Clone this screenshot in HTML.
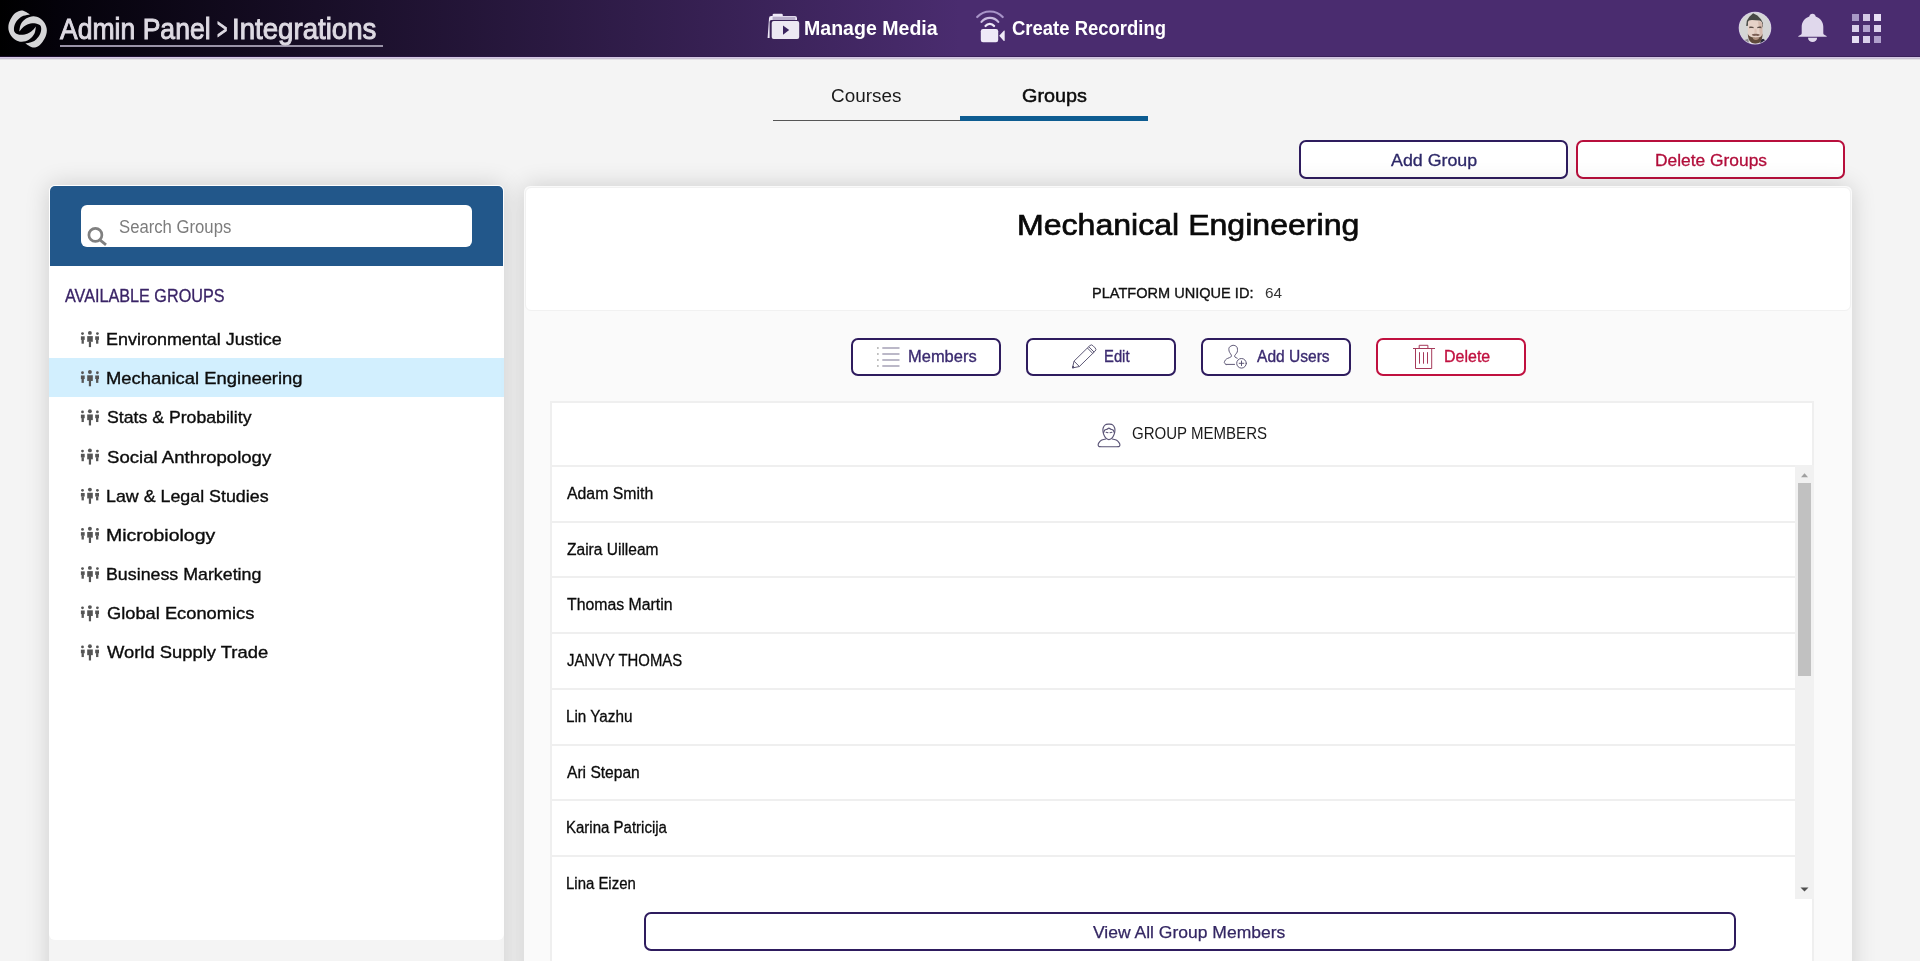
<!DOCTYPE html>
<html lang="en">
<head>
<meta charset="utf-8">
<title>Admin Panel - Integrations</title>
<style>
*{box-sizing:border-box;margin:0;padding:0}
html,body{width:1920px;height:961px;overflow:hidden}
body{background:#f4f4f4;font-family:"Liberation Sans",sans-serif;color:#0c0c0c;position:relative}
.a{position:absolute}
.t{position:absolute;white-space:nowrap;display:block;transform-origin:0 50%}
svg{position:absolute;overflow:visible}
#hdr{position:absolute;left:0;top:0;width:1920px;height:57px;border-bottom:1px solid rgba(45,26,72,.55);background:linear-gradient(to right,#000 0%,#04020a 3%,#4a2c6f 50%,#4a2c6f 100%)}
#hdrline{position:absolute;left:0;top:57px;width:1920px;height:1px;background:#d5c7e5;box-shadow:0 1px 0 #c9c1d3,0 2px 0 #e4e2e7}
.btn{position:absolute;border:2px solid #2e1c5e;border-radius:7px;background:#fff}
.btn.red{border-color:#b80f3c}
#leftsh{position:absolute;left:49px;top:185px;width:455px;height:900px;border-radius:6px;box-shadow:0 0 24px rgba(0,0,0,.16)}
#left{position:absolute;left:49px;top:185px;width:455px;height:755px;background:#fff;border-radius:6px;overflow:hidden}
#lefthead{position:absolute;left:1px;top:1px;width:453px;height:80px;background:#22578a;border-radius:5px 5px 0 0}
#search{position:absolute;left:31px;top:19px;width:391px;height:42px;background:#fff;border-radius:6px}
#sel{position:absolute;left:0;top:173px;width:455px;height:39px;background:#d2effe}
#right{position:absolute;left:524px;top:186px;width:1328px;height:800px;background:#fafafa;border-radius:6px;box-shadow:0 0 24px rgba(0,0,0,.16)}
#card{position:absolute;left:1px;top:1px;width:1326px;height:124px;background:#fff;border-radius:6px;border:1px solid #f1f1f1}
#tbl{position:absolute;left:26px;top:215px;width:1264px;height:600px;background:#fff;border:2px solid #efefef}
.rl{position:absolute;left:0;width:1243px;height:2px;background:#efefef}
#sbar{position:absolute;left:1243px;top:62px;width:19px;height:434px;background:#f1f1f1}
#thumb{position:absolute;left:3px;top:18px;width:13px;height:193px;background:#c1c1c1}
</style>
</head>
<body>
<div id="hdr"></div>
<div id="hdrline"></div>

<div class="a" style="left:60px;top:45px;width:323px;height:1.500px;background:#9a93a8"></div>
<!-- tabs -->
<div class="a" style="left:773px;top:120px;width:187px;height:1px;background:#555"></div>
<div class="a" style="left:960px;top:116px;width:188px;height:5px;background:#0d5c91"></div>

<!-- top buttons -->
<div class="btn" style="left:1299px;top:140px;width:269px;height:39px"></div>
<div class="btn red" style="left:1576px;top:140px;width:269px;height:39px"></div>

<!-- left panel -->
<div id="leftsh"></div>
<div id="left">
  <div id="lefthead"><div id="search"></div></div>
  <div id="sel"></div>
</div>

<!-- right panel -->
<div id="right">
  <div id="card"></div>
  <div class="btn" style="left:327px;top:152px;width:150px;height:38px"></div>
  <div class="btn" style="left:502px;top:152px;width:150px;height:38px"></div>
  <div class="btn" style="left:677px;top:152px;width:150px;height:38px"></div>
  <div class="btn red" style="left:852px;top:152px;width:150px;height:38px;border-color:#c0103f"></div>
  <div id="tbl">
    <div class="rl" style="top:62px;width:1260px"></div>
    <div class="rl" style="top:118px"></div>
    <div class="rl" style="top:173px"></div>
    <div class="rl" style="top:229px"></div>
    <div class="rl" style="top:285px"></div>
    <div class="rl" style="top:341px"></div>
    <div class="rl" style="top:396px"></div>
    <div class="rl" style="top:452px"></div>
    <div id="sbar"><div id="thumb"></div></div>
    <div class="btn" style="left:92px;top:509px;width:1092px;height:39px"></div>
  </div>
</div>

<svg width="1920" height="961" viewBox="0 0 1920 961" style="left:0;top:0;pointer-events:none">
<g fill="#d6d6d8"><path d="M29.93 14.41C28.67 13.76 24.77 10.77 22.38 10.51C20.00 10.25 17.61 11.33 15.62 12.85C13.62 14.37 11.63 17.19 10.41 19.62C9.20 22.05 8.33 24.91 8.33 27.43C8.33 29.94 9.20 32.63 10.41 34.71C11.63 36.80 13.71 38.75 15.62 39.92C17.53 41.09 19.61 41.83 21.86 41.74C24.12 41.65 27.07 40.74 29.15 39.40C31.23 38.05 33.23 35.84 34.36 33.67C35.48 31.50 35.66 27.60 35.92 26.38C35.35 27.03 33.88 29.09 32.54 30.29C31.19 31.49 29.80 32.81 27.85 33.57C25.90 34.32 22.90 34.93 20.82 34.82C18.74 34.70 16.50 33.86 15.36 32.89C14.21 31.92 13.95 30.57 13.95 28.99C13.95 27.40 14.54 25.06 15.36 23.36C16.17 21.67 17.50 20.09 18.84 18.84C20.19 17.59 21.58 16.61 23.43 15.87C25.27 15.13 28.85 14.65 29.93 14.41Z"/><path d="M29.93 14.41C28.67 13.76 24.77 10.77 22.38 10.51C20.00 10.25 17.61 11.33 15.62 12.85C13.62 14.37 11.63 17.19 10.41 19.62C9.20 22.05 8.33 24.91 8.33 27.43C8.33 29.94 9.20 32.63 10.41 34.71C11.63 36.80 13.71 38.75 15.62 39.92C17.53 41.09 19.61 41.83 21.86 41.74C24.12 41.65 27.07 40.74 29.15 39.40C31.23 38.05 33.23 35.84 34.36 33.67C35.48 31.50 35.66 27.60 35.92 26.38C35.35 27.03 33.88 29.09 32.54 30.29C31.19 31.49 29.80 32.81 27.85 33.57C25.90 34.32 22.90 34.93 20.82 34.82C18.74 34.70 16.50 33.86 15.36 32.89C14.21 31.92 13.95 30.57 13.95 28.99C13.95 27.40 14.54 25.06 15.36 23.36C16.17 21.67 17.50 20.09 18.84 18.84C20.19 17.59 21.58 16.61 23.43 15.87C25.27 15.13 28.85 14.65 29.93 14.41Z" transform="rotate(180 27.59 28.99)"/></g>
<g>
<path d="M769 18.2a2.2 2.2 0 0 1 2.2-2.2h1.400v-1a1.300 1.300 0 0 1 1.300-1.300h7.600a1.300 1.300 0 0 1 1.300 1.300v1h12a2.200 2.200 0 0 1 2.200 2.200v1.900h-25.600a1.800 1.800 0 0 0-1.800 1.800v16h-2z" fill="#efe9f8"/>
<rect x="772.600" y="16.700" width="22.800" height="3.300" fill="#b9aecb"/>
<rect x="771.7" y="21" width="27.5" height="18" rx="2" fill="#ece8f3"/>
<path d="M783 25.4l6.2 4.7-6.2 4.7z" fill="#3b2460"/>
</g>
<g fill="none" stroke-linecap="round">
<path d="M977.200 17a17.500 17.500 0 0 1 25.500 0" stroke="#a894c8" stroke-width="2.200"/>
<path d="M981.500 21.900a10.900 10.900 0 0 1 16.800 0" stroke="#c9bbdf" stroke-width="2.200"/>
<path d="M985.500 26a5.450 5.450 0 0 1 8.600 0" stroke="#efe9f8" stroke-width="2.200"/>
</g>
<rect x="980.8" y="29" width="17.4" height="13.2" rx="2.2" fill="#efeaf7"/>
<path d="M999.2 35.7l4.6-5a.5.5 0 0 1 .9.3v9.6a.5.5 0 0 1-.9.3z" fill="#efeaf7"/>
<defs><clipPath id="avc"><circle cx="1755" cy="28.1" r="15.700"/></clipPath><filter id="avb" x="-20%" y="-20%" width="140%" height="140%"><feGaussianBlur stdDeviation="20"/></filter></defs>
<circle cx="1755" cy="28.1" r="16.300" fill="#d9cfea"/>
<g clip-path="url(#avc)"><g transform="translate(1737 10) scale(0.03745)"><g filter="url(#avb)">
<rect x="0" y="0" width="961" height="961" fill="#d5d6d5"/>
<path d="M170 960L200 800L300 770L330 960Z" fill="#8d898c"/>
<path d="M600 960L640 790L700 770L780 830L800 960Z" fill="#28273a"/>
<path d="M330 960L340 850L470 900L480 960Z" fill="#efe9f0"/>
<path d="M245 430L262 290L330 180L430 85L545 150L640 245L692 350L695 470L640 420L300 420Z" fill="#474a45"/>
<path d="M292 330C300 290 330 272 400 270L600 278C650 285 672 320 676 380L682 600C680 760 600 890 485 892C370 890 296 770 290 620Z" fill="#e6d2c8"/>
<path d="M560 300C640 300 672 330 676 380L682 600C680 680 660 760 640 800L600 560Z" fill="#cdb0a2" opacity=".7"/>
<path d="M288 630C300 680 330 705 400 730C450 745 550 745 600 730C650 705 670 680 682 625C684 760 640 850 590 875C550 895 520 900 485 900C440 900 400 890 360 850C320 810 290 740 288 630Z" fill="#5e4a3a"/>
<path d="M420 725C470 740 540 740 590 725C590 770 560 800 500 800C450 800 420 770 420 725Z" fill="#c9a594" opacity=".75"/>
<path d="M395 655C440 630 560 630 610 660C600 700 560 690 500 690C450 690 410 700 395 655Z" fill="#7a5d52"/>
<path d="M325 450C360 430 410 435 445 455L440 490C400 480 360 480 330 490Z" fill="#5d5048"/>
<path d="M540 455C570 435 620 430 655 450L650 495C620 480 580 480 545 490Z" fill="#5d5048"/>
<path d="M470 500L520 500L530 610L465 610Z" fill="#d9bdb0" opacity=".8"/>
</g></g></g>
<path d="M1812.500 13.700c1.700 0 3 1.200 3.200 2.700 4.300 1.400 7.600 5.300 7.600 10.300v6.500c0 .7.400 1.300 1 1.600l2.200 1.100c.4.200.3.800-.2.800h-27.600c-.5 0-.6-.6-.2-.8l2.200-1.100c.6-.3 1-.9 1-1.600v-6.500c0-5 3.300-8.900 7.600-10.300.2-1.500 1.500-2.700 3.200-2.700z" fill="#e0d8ec"/>
<path d="M1808 37.700h9.100a4.550 4.300 0 0 1-9.100 0z" fill="#e0d8ec"/>
<rect x="1852" y="14" width="7" height="7" fill="#a898c6"/><rect x="1863" y="14" width="7" height="7" fill="#d4c9e6"/><rect x="1874" y="14" width="7" height="7" fill="#e8e0f5"/><rect x="1852" y="25" width="7" height="7" fill="#d9cfea"/><rect x="1863" y="25" width="7" height="7" fill="#b3a3cf"/><rect x="1874" y="25" width="7" height="7" fill="#dcd2ec"/><rect x="1852" y="36" width="7" height="7" fill="#e6def3"/><rect x="1863" y="36" width="7" height="7" fill="#dad0eb"/><rect x="1874" y="36" width="7" height="7" fill="#b0a0cc"/>
<g fill="none" stroke="#808080" stroke-width="2.700"><circle cx="95.400" cy="234.900" r="6.500"/><path d="M100.200 240.100l5.800 4.800" stroke-linecap="butt"/></g>
<g fill="#555" transform="translate(0 0.00)"><circle cx="89.900" cy="332.900" r="1.950"/><rect x="87.200" y="336.100" width="5.600" height="5.700"/><rect x="88.850" y="341.500" width="2.200" height="5.600"/><circle cx="82.500" cy="333.600" r="1.400"/><rect x="80.900" y="336.300" width="3.800" height="3.600"/><rect x="81.550" y="339.700" width="2.300" height="4"/><circle cx="97.400" cy="333.600" r="1.400"/><rect x="95.200" y="336.300" width="3.800" height="3.600"/><rect x="96.050" y="339.700" width="2.300" height="4"/></g>
<g fill="#555" transform="translate(0 39.17)"><circle cx="89.900" cy="332.900" r="1.950"/><rect x="87.200" y="336.100" width="5.600" height="5.700"/><rect x="88.850" y="341.500" width="2.200" height="5.600"/><circle cx="82.500" cy="333.600" r="1.400"/><rect x="80.900" y="336.300" width="3.800" height="3.600"/><rect x="81.550" y="339.700" width="2.300" height="4"/><circle cx="97.400" cy="333.600" r="1.400"/><rect x="95.200" y="336.300" width="3.800" height="3.600"/><rect x="96.050" y="339.700" width="2.300" height="4"/></g>
<g fill="#555" transform="translate(0 78.34)"><circle cx="89.900" cy="332.900" r="1.950"/><rect x="87.200" y="336.100" width="5.600" height="5.700"/><rect x="88.850" y="341.500" width="2.200" height="5.600"/><circle cx="82.500" cy="333.600" r="1.400"/><rect x="80.900" y="336.300" width="3.800" height="3.600"/><rect x="81.550" y="339.700" width="2.300" height="4"/><circle cx="97.400" cy="333.600" r="1.400"/><rect x="95.200" y="336.300" width="3.800" height="3.600"/><rect x="96.050" y="339.700" width="2.300" height="4"/></g>
<g fill="#555" transform="translate(0 117.51)"><circle cx="89.900" cy="332.900" r="1.950"/><rect x="87.200" y="336.100" width="5.600" height="5.700"/><rect x="88.850" y="341.500" width="2.200" height="5.600"/><circle cx="82.500" cy="333.600" r="1.400"/><rect x="80.900" y="336.300" width="3.800" height="3.600"/><rect x="81.550" y="339.700" width="2.300" height="4"/><circle cx="97.400" cy="333.600" r="1.400"/><rect x="95.200" y="336.300" width="3.800" height="3.600"/><rect x="96.050" y="339.700" width="2.300" height="4"/></g>
<g fill="#555" transform="translate(0 156.68)"><circle cx="89.900" cy="332.900" r="1.950"/><rect x="87.200" y="336.100" width="5.600" height="5.700"/><rect x="88.850" y="341.500" width="2.200" height="5.600"/><circle cx="82.500" cy="333.600" r="1.400"/><rect x="80.900" y="336.300" width="3.800" height="3.600"/><rect x="81.550" y="339.700" width="2.300" height="4"/><circle cx="97.400" cy="333.600" r="1.400"/><rect x="95.200" y="336.300" width="3.800" height="3.600"/><rect x="96.050" y="339.700" width="2.300" height="4"/></g>
<g fill="#555" transform="translate(0 195.85)"><circle cx="89.900" cy="332.900" r="1.950"/><rect x="87.200" y="336.100" width="5.600" height="5.700"/><rect x="88.850" y="341.500" width="2.200" height="5.600"/><circle cx="82.500" cy="333.600" r="1.400"/><rect x="80.900" y="336.300" width="3.800" height="3.600"/><rect x="81.550" y="339.700" width="2.300" height="4"/><circle cx="97.400" cy="333.600" r="1.400"/><rect x="95.200" y="336.300" width="3.800" height="3.600"/><rect x="96.050" y="339.700" width="2.300" height="4"/></g>
<g fill="#555" transform="translate(0 235.02)"><circle cx="89.900" cy="332.900" r="1.950"/><rect x="87.200" y="336.100" width="5.600" height="5.700"/><rect x="88.850" y="341.500" width="2.200" height="5.600"/><circle cx="82.500" cy="333.600" r="1.400"/><rect x="80.900" y="336.300" width="3.800" height="3.600"/><rect x="81.550" y="339.700" width="2.300" height="4"/><circle cx="97.400" cy="333.600" r="1.400"/><rect x="95.200" y="336.300" width="3.800" height="3.600"/><rect x="96.050" y="339.700" width="2.300" height="4"/></g>
<g fill="#555" transform="translate(0 274.19)"><circle cx="89.900" cy="332.900" r="1.950"/><rect x="87.200" y="336.100" width="5.600" height="5.700"/><rect x="88.850" y="341.500" width="2.200" height="5.600"/><circle cx="82.500" cy="333.600" r="1.400"/><rect x="80.900" y="336.300" width="3.800" height="3.600"/><rect x="81.550" y="339.700" width="2.300" height="4"/><circle cx="97.400" cy="333.600" r="1.400"/><rect x="95.200" y="336.300" width="3.800" height="3.600"/><rect x="96.050" y="339.700" width="2.300" height="4"/></g>
<g fill="#555" transform="translate(0 313.36)"><circle cx="89.900" cy="332.900" r="1.950"/><rect x="87.200" y="336.100" width="5.600" height="5.700"/><rect x="88.850" y="341.500" width="2.200" height="5.600"/><circle cx="82.500" cy="333.600" r="1.400"/><rect x="80.900" y="336.300" width="3.800" height="3.600"/><rect x="81.550" y="339.700" width="2.300" height="4"/><circle cx="97.400" cy="333.600" r="1.400"/><rect x="95.200" y="336.300" width="3.800" height="3.600"/><rect x="96.050" y="339.700" width="2.300" height="4"/></g>
<g fill="#a5a1b6"><rect x="877" y="347.25" width="1.700" height="1.500" fill="#aaa"/><rect x="882.300" y="347.25" width="17.200" height="1.500"/><rect x="877" y="353.25" width="1.700" height="1.500" fill="#aaa"/><rect x="882.300" y="353.25" width="17.200" height="1.500"/><rect x="877" y="359.25" width="1.700" height="1.500" fill="#aaa"/><rect x="882.300" y="359.25" width="17.200" height="1.500"/><rect x="877" y="365.25" width="1.700" height="1.500" fill="#aaa"/><rect x="882.300" y="365.25" width="17.200" height="1.500"/></g>
<g transform="translate(1072.490 367.930) rotate(-44.400)" fill="none" stroke="#565070" stroke-width="0.900" stroke-linejoin="round"><path d="M0 0L5.900 -3.800H28a2.200 2.200 0 0 1 2.200 2.200V1.600a2.200 2.200 0 0 1 -2.200 2.200H5.900Z"/><path d="M5.900 -3.800V3.800M24.600 -3.800V3.800M26.500 -3.800V3.800"/><path d="M0 0L1.700 -1.100V1.100Z" fill="#565070"/></g>
<g fill="none" stroke="#565070" stroke-width="0.950" stroke-linecap="round"><path d="M1234.56 364.40L1225.99 364.40M1225.99 364.40C1225.71 364.10 1224.38 363.40 1224.31 362.63C1224.24 361.86 1224.99 360.51 1225.55 359.80C1226.11 359.09 1226.79 358.86 1227.67 358.39C1228.55 357.92 1230.23 357.50 1230.85 356.97C1231.47 356.44 1231.59 355.97 1231.38 355.21C1231.18 354.44 1230.03 353.26 1229.61 352.38C1229.20 351.49 1228.95 350.76 1228.91 349.90C1228.87 349.05 1228.69 348.02 1229.37 347.25C1230.04 346.48 1231.78 345.42 1232.97 345.30C1234.16 345.19 1235.76 345.89 1236.51 346.54C1237.26 347.19 1237.35 348.28 1237.46 349.19C1237.58 350.11 1237.49 351.20 1237.22 352.02C1236.94 352.85 1236.21 353.55 1235.80 354.14C1235.39 354.73 1234.89 355.09 1234.74 355.56C1234.59 356.03 1234.51 356.53 1234.92 356.97C1235.33 357.42 1236.83 358.00 1237.22 358.21"/><circle cx="1241.500" cy="363.300" r="4.800"/><path d="M1239.200 363.300h4.600M1241.500 361v4.600"/></g>
<g fill="none" stroke="#a63a5a" stroke-width="1"><path d="M1413 348.500h22M1419.200 348.500v-3.200h8.700v3.200M1415.500 348.500v20h16.200v-20M1419.500 352.200v11.500M1423.500 352.200v11.500M1427.500 352.200v11.500"/></g>
<g fill="none" stroke="#5a5476" stroke-width="1.150" stroke-linecap="round"><path d="M1108.92 424.01C1109.54 424.16 1111.66 424.19 1112.63 424.90C1113.60 425.60 1114.40 427.05 1114.75 428.25C1115.11 429.46 1114.96 430.91 1114.75 432.14C1114.55 433.38 1114.05 434.65 1113.51 435.68C1112.98 436.71 1112.34 437.68 1111.57 438.33C1110.80 438.98 1109.80 439.57 1108.92 439.57C1108.03 439.57 1107.03 438.98 1106.27 438.33C1105.50 437.68 1104.85 436.71 1104.32 435.68C1103.79 434.65 1103.29 433.38 1103.08 432.14C1102.88 430.91 1102.73 429.46 1103.08 428.25C1103.44 427.05 1104.23 425.60 1105.21 424.90C1106.18 424.19 1108.30 424.16 1108.92 424.01"/><path d="M1103.61 432.50C1103.82 432.09 1104.29 430.55 1104.85 430.02C1105.41 429.49 1106.30 429.64 1106.97 429.32C1107.65 428.99 1108.27 428.08 1108.92 428.08C1109.57 428.08 1110.19 428.99 1110.86 429.32C1111.54 429.64 1112.41 429.49 1112.98 430.02C1113.56 430.55 1114.10 432.09 1114.33 432.50"/><path d="M1105.74 439.04C1105.00 439.25 1102.49 439.60 1101.32 440.28C1100.14 440.95 1099.18 442.28 1098.66 443.11C1098.14 443.93 1098.10 444.65 1098.20 445.23C1098.30 445.81 1098.27 446.32 1099.26 446.57C1100.25 446.82 1102.54 446.69 1104.14 446.71C1105.75 446.74 1107.27 446.71 1108.92 446.71C1110.57 446.71 1112.40 446.74 1114.05 446.71C1115.70 446.69 1117.85 446.82 1118.82 446.57C1119.79 446.32 1119.79 445.81 1119.88 445.23C1119.97 444.65 1119.88 443.93 1119.35 443.11C1118.82 442.28 1117.88 440.95 1116.70 440.28C1115.52 439.60 1113.01 439.25 1112.28 439.04"/><path d="M1106.09 432.32L1108.03 432.67M1109.98 432.67L1111.92 432.32" stroke-width="1.100"/></g>
<path d="M1801 477.200l3.500-4 3.500 4z" fill="#a0a0a0"/><path d="M1800.500 887.500l4 4 4-4z" fill="#505050"/>
</svg>
<span class="t" style="left:59.70px;top:11.70px;font-size:30px;line-height:33px;color:#dedae3;transform:scaleX(0.8852);-webkit-text-stroke:1px #dedae3">Admin Panel</span>
<span class="t" style="left:216.91px;top:11.70px;font-size:30px;line-height:33px;color:#dedae3;transform:scaleX(0.5938);-webkit-text-stroke:1px #dedae3">&gt;</span>
<span class="t" style="left:232.16px;top:11.70px;font-size:30px;line-height:33px;color:#dedae3;transform:scaleX(0.9209);-webkit-text-stroke:1px #dedae3">Integrations</span>
<span class="t" style="left:803.80px;top:17.20px;font-size:19.5px;line-height:22px;color:#ffffff;transform:scaleX(1.0027);font-weight:bold">Manage Media</span>
<span class="t" style="left:1011.60px;top:17.20px;font-size:19.5px;line-height:22px;color:#ffffff;transform:scaleX(0.9472);font-weight:bold">Create Recording</span>
<span class="t" style="left:831.30px;top:84.70px;font-size:18.7px;line-height:21px;color:#1a1a1a;transform:scaleX(1.0110)">Courses</span>
<span class="t" style="left:1021.50px;top:84.70px;font-size:18.7px;line-height:21px;color:#0c0c0c;transform:scaleX(1.0585);-webkit-text-stroke:0.5px #0c0c0c">Groups</span>
<span class="t" style="left:1390.50px;top:150.80px;font-size:17px;line-height:19px;color:#2d2868;transform:scaleX(1.0481);-webkit-text-stroke:0.3px #2d2868">Add Group</span>
<span class="t" style="left:1654.78px;top:150.80px;font-size:17px;line-height:19px;color:#b10d3a;transform:scaleX(1.0221);-webkit-text-stroke:0.3px #b10d3a">Delete Groups</span>
<span class="t" style="left:119.20px;top:216.70px;font-size:17.5px;line-height:20px;color:#7c7c7c;transform:scaleX(0.9538)">Search Groups</span>
<span class="t" style="left:64.70px;top:285.80px;font-size:18px;line-height:20px;color:#3a2466;transform:scaleX(0.8991);-webkit-text-stroke:0.3px #3a2466">AVAILABLE GROUPS</span>
<span class="t" style="left:105.64px;top:330.00px;font-size:17px;line-height:19px;color:#0c0c0c;transform:scaleX(1.0562);-webkit-text-stroke:0.35px #0c0c0c">Environmental Justice</span>
<span class="t" style="left:105.62px;top:369.17px;font-size:17px;line-height:19px;color:#0c0c0c;transform:scaleX(1.0834);-webkit-text-stroke:0.35px #0c0c0c">Mechanical Engineering</span>
<span class="t" style="left:106.70px;top:408.34px;font-size:17px;line-height:19px;color:#0c0c0c;transform:scaleX(1.0402);-webkit-text-stroke:0.35px #0c0c0c">Stats &amp; Probability</span>
<span class="t" style="left:106.70px;top:447.51px;font-size:17px;line-height:19px;color:#0c0c0c;transform:scaleX(1.0929);-webkit-text-stroke:0.35px #0c0c0c">Social Anthropology</span>
<span class="t" style="left:105.65px;top:486.68px;font-size:17px;line-height:19px;color:#0c0c0c;transform:scaleX(1.0489);-webkit-text-stroke:0.35px #0c0c0c">Law &amp; Legal Studies</span>
<span class="t" style="left:105.56px;top:525.85px;font-size:17px;line-height:19px;color:#0c0c0c;transform:scaleX(1.1441);-webkit-text-stroke:0.35px #0c0c0c">Microbiology</span>
<span class="t" style="left:105.65px;top:565.02px;font-size:17px;line-height:19px;color:#0c0c0c;transform:scaleX(1.0471);-webkit-text-stroke:0.35px #0c0c0c">Business Marketing</span>
<span class="t" style="left:106.70px;top:604.19px;font-size:17px;line-height:19px;color:#0c0c0c;transform:scaleX(1.0754);-webkit-text-stroke:0.35px #0c0c0c">Global Economics</span>
<span class="t" style="left:106.70px;top:643.36px;font-size:17px;line-height:19px;color:#0c0c0c;transform:scaleX(1.0817);-webkit-text-stroke:0.35px #0c0c0c">World Supply Trade</span>
<span class="t" style="left:1016.66px;top:207.80px;font-size:30px;line-height:33px;color:#0a0a0a;transform:scaleX(1.0691);-webkit-text-stroke:0.7px #0a0a0a">Mechanical Engineering</span>
<span class="t" style="left:1092.02px;top:284.50px;font-size:14.8px;line-height:16px;color:#111;transform:scaleX(0.9837);-webkit-text-stroke:0.35px #111">PLATFORM UNIQUE ID:</span>
<span class="t" style="left:1265.20px;top:284.50px;font-size:14.8px;line-height:16px;color:#333;transform:scaleX(1.0352)">64</span>
<span class="t" style="left:907.90px;top:347.30px;font-size:16.5px;line-height:18px;color:#3b2b70;transform:scaleX(0.9983);-webkit-text-stroke:0.35px #3b2b70">Members</span>
<span class="t" style="left:1104.30px;top:347.30px;font-size:16.5px;line-height:18px;color:#3b2b70;transform:scaleX(0.8977);-webkit-text-stroke:0.35px #3b2b70">Edit</span>
<span class="t" style="left:1256.50px;top:347.30px;font-size:16.5px;line-height:18px;color:#3b2b70;transform:scaleX(0.9430);-webkit-text-stroke:0.35px #3b2b70">Add Users</span>
<span class="t" style="left:1443.83px;top:347.30px;font-size:16.5px;line-height:18px;color:#c0103f;transform:scaleX(0.9695);-webkit-text-stroke:0.35px #c0103f">Delete</span>
<span class="t" style="left:1131.60px;top:424.40px;font-size:16.5px;line-height:18px;color:#1a1a1a;transform:scaleX(0.9110)">GROUP MEMBERS</span>
<span class="t" style="left:567.30px;top:485.00px;font-size:16px;line-height:17px;color:#0c0c0c;transform:scaleX(0.9891);-webkit-text-stroke:0.3px #0c0c0c">Adam Smith</span>
<span class="t" style="left:567.30px;top:540.70px;font-size:16px;line-height:17px;color:#0c0c0c;transform:scaleX(0.9711);-webkit-text-stroke:0.3px #0c0c0c">Zaira Uilleam</span>
<span class="t" style="left:567.30px;top:596.40px;font-size:16px;line-height:17px;color:#0c0c0c;transform:scaleX(0.9896);-webkit-text-stroke:0.3px #0c0c0c">Thomas Martin</span>
<span class="t" style="left:567.30px;top:652.10px;font-size:16px;line-height:17px;color:#0c0c0c;transform:scaleX(0.9290);-webkit-text-stroke:0.3px #0c0c0c">JANVY THOMAS</span>
<span class="t" style="left:566.35px;top:707.80px;font-size:16px;line-height:17px;color:#0c0c0c;transform:scaleX(0.9533);-webkit-text-stroke:0.3px #0c0c0c">Lin Yazhu</span>
<span class="t" style="left:567.30px;top:763.50px;font-size:16px;line-height:17px;color:#0c0c0c;transform:scaleX(0.9741);-webkit-text-stroke:0.3px #0c0c0c">Ari Stepan</span>
<span class="t" style="left:566.36px;top:819.20px;font-size:16px;line-height:17px;color:#0c0c0c;transform:scaleX(0.9381);-webkit-text-stroke:0.3px #0c0c0c">Karina Patricija</span>
<span class="t" style="left:566.37px;top:874.90px;font-size:16px;line-height:17px;color:#0c0c0c;transform:scaleX(0.9338);-webkit-text-stroke:0.3px #0c0c0c">Lina Eizen</span>
<span class="t" style="left:1093.20px;top:922.60px;font-size:16.7px;line-height:19px;color:#342763;transform:scaleX(1.0489);-webkit-text-stroke:0.25px #342763">View All Group Members</span>
</body>
</html>
